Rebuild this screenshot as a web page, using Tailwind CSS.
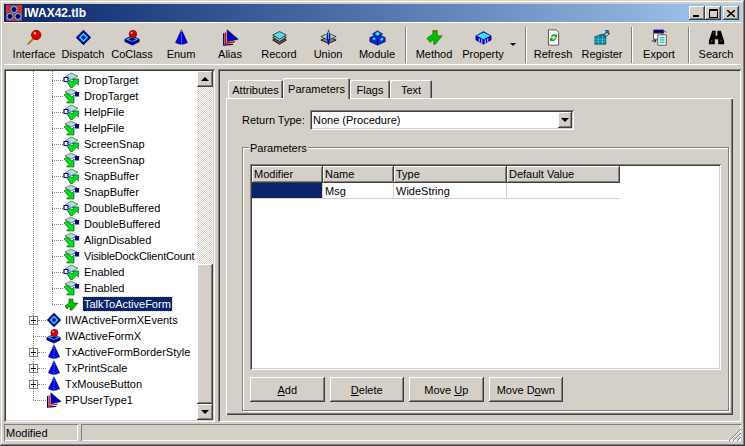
<!DOCTYPE html>
<html lang="en">
<head>
    <meta charset="UTF-8">
    <title>IWAX42.tlb</title>
    <script src="https://cdn.jsdelivr.net/npm/@tailwindcss/browser@4"></script>
</head>
<body class="bg-[#d4d0c8]">
    <!-- shared icons -->
    <svg class="hidden" xmlns="http://www.w3.org/2000/svg">
        <symbol id="i-interface" viewBox="0 0 20 20"><path d="M2 18 9 11" stroke="#b07000" stroke-width="2"/><circle cx="12" cy="7" r="5.500" fill="#e00000" stroke="#800000"/><circle cx="10.500" cy="5" r="1.500" fill="#ffb0b0"/></symbol>
        <symbol id="i-dispatch" viewBox="0 0 20 20"><path d="M10 1 19 10 10 19 1 10Z" fill="#000080"/><path d="M10 4.500 15.500 10 10 15.500 4.500 10Z" fill="#20e0f0"/><path d="M10 7 13 10 10 13 7 10Z" fill="#0000c0"/></symbol>
        <symbol id="i-coclass" viewBox="0 0 20 20"><path d="M1 12 9 8 18 12V15L10 19 1 15Z" fill="#0000a0" stroke="#000040" stroke-width=".6"/><path d="M2 12 9 9 17 12 10 15Z" fill="#20d0e0"/><path d="M5 12 10 10 14 12 10 14Z" fill="#000080"/><circle cx="10.500" cy="6" r="4.500" fill="#d80000" stroke="#600000" stroke-width=".6"/><circle cx="9" cy="4.500" r="1.200" fill="#ffb0b0"/></symbol>
        <symbol id="i-enum" viewBox="0 0 20 20"><path d="M10 1 17 16Q10 20 3 16Z" fill="#0000e0" stroke="#000060" stroke-width=".7"/><path d="M10 2 10 18" stroke="#30e0f0" stroke-width="1" stroke-dasharray="1.500 1.500"/></symbol>
        <symbol id="i-alias" viewBox="0 0 20 20"><path d="M6 1 19 12 6 15Z" fill="#0000c0" stroke="#000040" stroke-width=".7"/><path d="M4 4 4 17 15 15" fill="none" stroke="#e00000" stroke-width="1.500"/><path d="M2 5 2 19 13 18" fill="none" stroke="#000060" stroke-width="1.500"/></symbol>
        <symbol id="i-record" viewBox="0 0 20 20"><path d="M2 13 10 9 18 13 10 18Z" fill="#606060" stroke="#000"/><path d="M2 10 10 6 18 10 10 15Z" fill="#b0b0a8" stroke="#000"/><path d="M2 7 10 3 18 7 10 12Z" fill="#50e0f0" stroke="#303030"/></symbol>
        <symbol id="i-union" viewBox="0 0 20 20"><path d="M1 13 10 9 19 13 10 17Z" fill="#808080" stroke="#000"/><path d="M1 9 10 5 19 9 10 13Z" fill="#b0d8d8" stroke="#303030"/><path d="M10 1 12 9 10 19 8 9Z" fill="#0000d0" stroke="#000060" stroke-width=".5"/><path d="M10 3V12" stroke="#40e0f0"/></symbol>
        <symbol id="i-module" viewBox="0 0 20 20"><path d="M1 10 10 6 19 10V15L10 19 1 15Z" fill="#0030d0" stroke="#000060" stroke-width=".7"/><path d="M4 6 10 2 16 6 10 10Z" fill="#0030d0" stroke="#000060" stroke-width=".7"/><path d="M10 3 13 6 10 8 7 6Z M4 11 7 10 8 12 5 13Z M13 12 16 10 17 12 14 14Z" fill="#40e0f0"/><path d="M10 11V19" stroke="#000060"/></symbol>
        <symbol id="i-method" viewBox="0 0 20 20"><path d="M1 11 8 6V2L13 2 13 8 19 8 11 18 9 18 9 12 5 16Z" fill="#00c000" stroke="#005000" stroke-width=".6"/><path d="M8 2H13V8" fill="none" stroke="#806000" stroke-width="1.200"/></symbol>
        <symbol id="i-property" viewBox="0 0 20 20"><path d="M1 8 10 3 19 8 19 13 10 18 1 13Z" fill="#0000d0" stroke="#000050" stroke-width=".6"/><path d="M2 8 10 4 18 8 10 12Z" fill="#40e0f0"/><path d="M5 11V15M8 12V17M12 12V17M15 11V15" stroke="#fff"/></symbol>
        <symbol id="i-refresh" viewBox="0 0 20 20"><path d="M4 1H13L16 4V19H4Z" fill="#fff" stroke="#404040"/><path d="M7 9A4 4 0 0 1 13 7L14 5V10H10L12 8.500A2.500 2.500 0 0 0 8.500 10Z M13 11A4 4 0 0 1 7 13.500L6 15V10.500H10L8 12A2.500 2.500 0 0 0 11.500 11Z" fill="#00a000"/></symbol>
        <symbol id="i-register" viewBox="0 0 20 20"><path d="M1 9 9 6 14 8V18H1Z" fill="#108090" stroke="#003040" stroke-width=".6"/><path d="M1 12H14M1 15H14M5 7V18M10 7V18" stroke="#40e0f0" stroke-width=".7"/><path d="M10 8 17 2M17 2 13 2M17 2 17 6" stroke="#0060a0" stroke-width="1.500" fill="none"/><path d="M14 9 19 5" stroke="#404040"/></symbol>
        <symbol id="i-export" viewBox="0 0 20 20"><path d="M3 1H15V5H3Z" fill="#000080" stroke="#404040" stroke-width=".6"/><path d="M3 5H13V12H3Z" fill="#fff" stroke="#404040"/><path d="M8 7H18V19H8Z" fill="#fff" stroke="#404040"/><path d="M10 10H16M10 12H16M10 14H16M10 16H16" stroke="#00a0a0"/><path d="M1 14H6M4 12 6 14 4 16" fill="none" stroke="#000"/><path d="M16 2 18 4" stroke="#000"/></symbol>
        <symbol id="i-search" viewBox="0 0 20 20"><path d="M5 2H9V8H11V2H15L19 14V18H12V12H8V18H1V14Z" fill="#000"/><path d="M4 14H5M15 14H16" stroke="#fff"/><path d="M6 4H7" stroke="#808080"/></symbol>
        <symbol id="t-get" viewBox="0 0 16 16"><path d="M2 5 8 1 15 4 9 8Z" fill="#a4dfe4" stroke="#505050" stroke-width=".7"/><path d="M1 5.500H5V9.500H1Z" fill="#fff" stroke="#0000c0" stroke-width="1.200"/><path d="M4 10 7 8 9 10 11 8 9.500 7H15.500V13L13.500 11 9 16H8Z" fill="#00e020" stroke="#004000" stroke-width=".6"/></symbol>
        <symbol id="t-set" viewBox="0 0 16 16"><path d="M2 4 8 1 14 4 8 7Z" fill="#a4dfe4" stroke="#505050" stroke-width=".7"/><path d="M12 4H16V8.500H12Z" fill="#000080"/><path d="M1 7 4 5 9 9 11 7V15H3.500L6 12.500Z" fill="#00e020" stroke="#004000" stroke-width=".6"/></symbol>
        <symbol id="t-method" viewBox="0 0 16 16"><path d="M2 10 6 7V3H10V7H15L9 14H7V10L4 13Z" fill="#00c000" stroke="#004000" stroke-width=".6"/></symbol>
    </svg>

    <div class="w-[745px] h-[446px] overflow-hidden flex flex-col p-1 bg-[#d4d0c8] text-black text-[11px] leading-[14px] font-['Liberation_Sans',sans-serif] shadow-[inset_-1px_-1px_0_#404040,inset_1px_1px_0_#d4d0c8,inset_-2px_-2px_0_#808080,inset_2px_2px_0_#fff]">

        <!-- title bar -->
        <div class="h-[18px] shrink-0 flex items-center pl-[2px] pr-[2px] bg-gradient-to-r from-[#0a246a] to-[#a6caf0]">
            <svg class="w-4 h-4 shrink-0" viewBox="0 0 16 16"><rect width="16" height="16" fill="#d03030"/><circle cx="8" cy="4.500" r="3" fill="#000080" stroke="#40e0f0"/><circle cx="4" cy="11.500" r="3" fill="#000080" stroke="#40e0f0"/><circle cx="12" cy="11.500" r="3" fill="#000080" stroke="#40e0f0"/></svg>
            <span class="ml-[2px] font-bold text-white text-[12px]">IWAX42.tlb</span>
            <div class="ml-auto flex">
                <div class="w-4 h-[14px] flex items-end justify-start pl-1 pb-[3px] bg-[#d4d0c8] shadow-[inset_-1px_-1px_0_#404040,inset_1px_1px_0_#fff,inset_-2px_-2px_0_#808080]"><div class="w-[6px] h-[2px] bg-black"></div></div>
                <div class="w-4 h-[14px] flex items-center justify-center bg-[#d4d0c8] shadow-[inset_-1px_-1px_0_#404040,inset_1px_1px_0_#fff,inset_-2px_-2px_0_#808080]"><div class="w-[9px] h-[9px] border border-t-2 border-black"></div></div>
                <div class="w-4 h-[14px] ml-[2px] flex items-center justify-center bg-[#d4d0c8] shadow-[inset_-1px_-1px_0_#404040,inset_1px_1px_0_#fff,inset_-2px_-2px_0_#808080]"><svg class="w-2 h-[7px]" viewBox="0 0 8 7"><path d="M0 0 8 7M8 0 0 7" stroke="#000" stroke-width="1.500"/></svg></div>
            </div>
        </div>

        <!-- toolbar -->
        <div class="h-[47px] shrink-0 flex items-start pt-[5px] pl-[5.5px] shadow-[inset_0_1px_0_#fff,inset_0_-4px_0_#d4d0c8,inset_0_-5px_0_#fff]">
            <div class="w-[49px] flex flex-col items-center"><svg class="w-[17px] h-[17px] mt-[2px] mb-[1px]"><use href="#i-interface"/></svg><span>Interface</span></div>
            <div class="w-[49px] flex flex-col items-center"><svg class="w-[17px] h-[17px] mt-[2px] mb-[1px]"><use href="#i-dispatch"/></svg><span>Dispatch</span></div>
            <div class="w-[49px] flex flex-col items-center"><svg class="w-[17px] h-[17px] mt-[2px] mb-[1px]"><use href="#i-coclass"/></svg><span>CoClass</span></div>
            <div class="w-[49px] flex flex-col items-center"><svg class="w-[17px] h-[17px] mt-[2px] mb-[1px]"><use href="#i-enum"/></svg><span>Enum</span></div>
            <div class="w-[49px] flex flex-col items-center"><svg class="w-[17px] h-[17px] mt-[2px] mb-[1px]"><use href="#i-alias"/></svg><span>Alias</span></div>
            <div class="w-[49px] flex flex-col items-center"><svg class="w-[17px] h-[17px] mt-[2px] mb-[1px]"><use href="#i-record"/></svg><span>Record</span></div>
            <div class="w-[49px] flex flex-col items-center"><svg class="w-[17px] h-[17px] mt-[2px] mb-[1px]"><use href="#i-union"/></svg><span>Union</span></div>
            <div class="w-[49px] flex flex-col items-center"><svg class="w-[17px] h-[17px] mt-[2px] mb-[1px]"><use href="#i-module"/></svg><span>Module</span></div>
            <div class="w-[2px] h-9 mx-[3px] border-l border-r border-l-[#808080] border-r-white"></div>
            <div class="w-[49px] flex flex-col items-center"><svg class="w-[17px] h-[17px] mt-[2px] mb-[1px]"><use href="#i-method"/></svg><span>Method</span></div>
            <div class="w-[49px] flex flex-col items-center"><svg class="w-[17px] h-[17px] mt-[2px] mb-[1px]"><use href="#i-property"/></svg><span>Property</span></div>
            <div class="w-[11px] pt-[16px] flex justify-center"><div class="border-x-[3.500px] border-t-[3.500px] border-x-transparent border-t-black"></div></div>
            <div class="w-[2px] h-9 ml-[6px] mr-[2px] border-l border-r border-l-[#808080] border-r-white"></div>
            <div class="w-[49px] flex flex-col items-center"><svg class="w-[17px] h-[17px] mt-[2px] mb-[1px]"><use href="#i-refresh"/></svg><span>Refresh</span></div>
            <div class="w-[49px] flex flex-col items-center"><svg class="w-[17px] h-[17px] mt-[2px] mb-[1px]"><use href="#i-register"/></svg><span>Register</span></div>
            <div class="w-[2px] h-9 ml-1 mr-[2px] border-l border-r border-l-[#808080] border-r-white"></div>
            <div class="w-[49px] flex flex-col items-center"><svg class="w-[17px] h-[17px] mt-[2px] mb-[1px]"><use href="#i-export"/></svg><span>Export</span></div>
            <div class="w-[2px] h-9 ml-1 mr-[2px] border-l border-r border-l-[#808080] border-r-white"></div>
            <div class="w-[49px] flex flex-col items-center"><svg class="w-[17px] h-[17px] mt-[2px] mb-[1px]"><use href="#i-search"/></svg><span>Search</span></div>
        </div>

        <!-- main area -->
        <div class="h-[353px] shrink-0 flex gap-[3px]">

            <!-- tree + scrollbar -->
            <div class="w-[211px] shrink-0 flex p-[2px] bg-white shadow-[inset_1px_1px_0_#808080,inset_-1px_-1px_0_#fff,inset_2px_2px_0_#404040,inset_-2px_-2px_0_#d4d0c8]">
                <div class="relative w-[191px] overflow-hidden pt-[1px] whitespace-nowrap">
                    <div class="absolute left-[27px] top-0 h-[329px] border-l border-dotted border-[#808080]"></div>
                    <div class="absolute left-[46px] top-0 h-[233px] border-l border-dotted border-[#808080]"></div>

                    <div class="h-4 flex items-center pl-[46px]"><span class="w-[11px] border-t border-dotted border-[#808080]"></span><svg class="w-4 h-4"><use href="#t-get"/></svg><span class="ml-[5px]">DropTarget</span></div>
                    <div class="h-4 flex items-center pl-[46px]"><span class="w-[11px] border-t border-dotted border-[#808080]"></span><svg class="w-4 h-4"><use href="#t-set"/></svg><span class="ml-[5px]">DropTarget</span></div>
                    <div class="h-4 flex items-center pl-[46px]"><span class="w-[11px] border-t border-dotted border-[#808080]"></span><svg class="w-4 h-4"><use href="#t-get"/></svg><span class="ml-[5px]">HelpFile</span></div>
                    <div class="h-4 flex items-center pl-[46px]"><span class="w-[11px] border-t border-dotted border-[#808080]"></span><svg class="w-4 h-4"><use href="#t-set"/></svg><span class="ml-[5px]">HelpFile</span></div>
                    <div class="h-4 flex items-center pl-[46px]"><span class="w-[11px] border-t border-dotted border-[#808080]"></span><svg class="w-4 h-4"><use href="#t-get"/></svg><span class="ml-[5px]">ScreenSnap</span></div>
                    <div class="h-4 flex items-center pl-[46px]"><span class="w-[11px] border-t border-dotted border-[#808080]"></span><svg class="w-4 h-4"><use href="#t-set"/></svg><span class="ml-[5px]">ScreenSnap</span></div>
                    <div class="h-4 flex items-center pl-[46px]"><span class="w-[11px] border-t border-dotted border-[#808080]"></span><svg class="w-4 h-4"><use href="#t-get"/></svg><span class="ml-[5px]">SnapBuffer</span></div>
                    <div class="h-4 flex items-center pl-[46px]"><span class="w-[11px] border-t border-dotted border-[#808080]"></span><svg class="w-4 h-4"><use href="#t-set"/></svg><span class="ml-[5px]">SnapBuffer</span></div>
                    <div class="h-4 flex items-center pl-[46px]"><span class="w-[11px] border-t border-dotted border-[#808080]"></span><svg class="w-4 h-4"><use href="#t-get"/></svg><span class="ml-[5px]">DoubleBuffered</span></div>
                    <div class="h-4 flex items-center pl-[46px]"><span class="w-[11px] border-t border-dotted border-[#808080]"></span><svg class="w-4 h-4"><use href="#t-set"/></svg><span class="ml-[5px]">DoubleBuffered</span></div>
                    <div class="h-4 flex items-center pl-[46px]"><span class="w-[11px] border-t border-dotted border-[#808080]"></span><svg class="w-4 h-4"><use href="#t-set"/></svg><span class="ml-[5px]">AlignDisabled</span></div>
                    <div class="h-4 flex items-center pl-[46px]"><span class="w-[11px] shrink-0 border-t border-dotted border-[#808080]"></span><svg class="w-4 h-4 shrink-0"><use href="#t-set"/></svg><span class="ml-[5px] tracking-[-0.2px]">VisibleDockClientCount</span></div>
                    <div class="h-4 flex items-center pl-[46px]"><span class="w-[11px] border-t border-dotted border-[#808080]"></span><svg class="w-4 h-4"><use href="#t-get"/></svg><span class="ml-[5px]">Enabled</span></div>
                    <div class="h-4 flex items-center pl-[46px]"><span class="w-[11px] border-t border-dotted border-[#808080]"></span><svg class="w-4 h-4"><use href="#t-set"/></svg><span class="ml-[5px]">Enabled</span></div>
                    <div class="h-4 flex items-center pl-[46px]"><span class="w-[11px] border-t border-dotted border-[#808080]"></span><svg class="w-4 h-4"><use href="#t-method"/></svg><span class="ml-[4px] px-[1px] bg-[#0a246a] text-white outline-1 outline-dotted outline-[#d4d0c8]">TalkToActiveForm</span></div>

                    <div class="h-4 flex items-center pl-[23px]"><span class="w-[9px] h-[9px] flex items-center justify-center border border-[#808080] bg-white"><svg class="w-[5px] h-[5px]" viewBox="0 0 5 5"><path d="M0 2.500H5M2.500 0V5" stroke="#000"/></svg></span><span class="w-[8px] border-t border-dotted border-[#808080]"></span><svg class="w-4 h-4"><use href="#i-dispatch"/></svg><span class="ml-[3px]">IIWActiveFormXEvents</span></div>
                    <div class="h-4 flex items-center pl-[27px]"><span class="w-[13px] border-t border-dotted border-[#808080]"></span><svg class="w-4 h-4"><use href="#i-coclass"/></svg><span class="ml-[3px]">IWActiveFormX</span></div>
                    <div class="h-4 flex items-center pl-[23px]"><span class="w-[9px] h-[9px] flex items-center justify-center border border-[#808080] bg-white"><svg class="w-[5px] h-[5px]" viewBox="0 0 5 5"><path d="M0 2.500H5M2.500 0V5" stroke="#000"/></svg></span><span class="w-[8px] border-t border-dotted border-[#808080]"></span><svg class="w-4 h-4"><use href="#i-enum"/></svg><span class="ml-[3px]">TxActiveFormBorderStyle</span></div>
                    <div class="h-4 flex items-center pl-[23px]"><span class="w-[9px] h-[9px] flex items-center justify-center border border-[#808080] bg-white"><svg class="w-[5px] h-[5px]" viewBox="0 0 5 5"><path d="M0 2.500H5M2.500 0V5" stroke="#000"/></svg></span><span class="w-[8px] border-t border-dotted border-[#808080]"></span><svg class="w-4 h-4"><use href="#i-enum"/></svg><span class="ml-[3px]">TxPrintScale</span></div>
                    <div class="h-4 flex items-center pl-[23px]"><span class="w-[9px] h-[9px] flex items-center justify-center border border-[#808080] bg-white"><svg class="w-[5px] h-[5px]" viewBox="0 0 5 5"><path d="M0 2.500H5M2.500 0V5" stroke="#000"/></svg></span><span class="w-[8px] border-t border-dotted border-[#808080]"></span><svg class="w-4 h-4"><use href="#i-enum"/></svg><span class="ml-[3px]">TxMouseButton</span></div>
                    <div class="h-4 flex items-center pl-[27px]"><span class="w-[13px] border-t border-dotted border-[#808080]"></span><svg class="w-4 h-4"><use href="#i-alias"/></svg><span class="ml-[3px]">PPUserType1</span></div>
                </div>
                <div class="w-4 flex flex-col">
                    <div class="h-4 shrink-0 flex items-center justify-center bg-[#d4d0c8] shadow-[inset_-1px_-1px_0_#404040,inset_1px_1px_0_#fff,inset_-2px_-2px_0_#808080]"><div class="border-x-[4px] border-b-[4px] border-x-transparent border-b-black"></div></div>
                    <div class="h-[177px] shrink-0 bg-[conic-gradient(#d4d0c8_25%,#fff_0_50%,#d4d0c8_0_75%,#fff_0)] bg-[length:2px_2px]"></div>
                    <div class="flex-1 bg-[#d4d0c8] shadow-[inset_-1px_-1px_0_#404040,inset_1px_1px_0_#fff,inset_-2px_-2px_0_#808080]"></div>
                    <div class="h-4 shrink-0 flex items-center justify-center bg-[#d4d0c8] shadow-[inset_-1px_-1px_0_#404040,inset_1px_1px_0_#fff,inset_-2px_-2px_0_#808080]"><div class="border-x-[4px] border-t-[4px] border-x-transparent border-t-black"></div></div>
                </div>
            </div>

            <!-- right panel -->
            <div class="flex-1 flex flex-col pt-[9px] px-2 pb-[7px] shadow-[inset_1px_1px_0_#808080,inset_-1px_-1px_0_#fff,inset_2px_2px_0_#404040,inset_-2px_-2px_0_#d4d0c8]">
                <div class="flex items-end h-5 pl-[2px] shrink-0">
                    <div class="w-[55px] h-[18px] pt-[2px] flex items-center justify-center rounded-t-[2px] shadow-[inset_1px_1px_0_#fff,inset_-1px_0_0_#404040,inset_-2px_0_0_#808080]">Attributes</div>
                    <div class="relative z-10 -mb-[1px] w-[67px] h-[21px] flex items-center justify-center bg-[#d4d0c8] rounded-t-[2px] shadow-[inset_1px_1px_0_#fff,inset_-1px_0_0_#404040,inset_-2px_0_0_#808080]">Parameters</div>
                    <div class="w-[40px] h-[18px] pt-[2px] flex items-center justify-center rounded-t-[2px] shadow-[inset_1px_1px_0_#fff,inset_-1px_0_0_#404040,inset_-2px_0_0_#808080]">Flags</div>
                    <div class="w-[42px] h-[18px] pt-[2px] flex items-center justify-center rounded-t-[2px] shadow-[inset_1px_1px_0_#fff,inset_-1px_0_0_#404040,inset_-2px_0_0_#808080]">Text</div>
                </div>
                <div class="flex-1 flex flex-col pt-[12px] pl-[16px] pr-[4px] pb-[4px] shadow-[inset_1px_1px_0_#fff,inset_-1px_-1px_0_#404040,inset_-2px_-2px_0_#808080]">
                    <div class="h-5 shrink-0 flex items-center">
                        <span class="w-[68px]">Return Type:</span>
                        <div class="w-[264px] h-5 flex items-center justify-between bg-white pl-[3px] pr-[2px] shadow-[inset_1px_1px_0_#808080,inset_-1px_-1px_0_#fff,inset_2px_2px_0_#404040,inset_-2px_-2px_0_#d4d0c8]">
                            <span>None (Procedure)</span>
                            <div class="w-[14px] h-4 flex items-center justify-center bg-[#d4d0c8] shadow-[inset_-1px_-1px_0_#404040,inset_1px_1px_0_#fff,inset_-2px_-2px_0_#808080]"><div class="border-x-[4px] border-t-[4px] border-x-transparent border-t-black"></div></div>
                        </div>
                    </div>
                    <div class="relative flex-1 mt-[17px] flex flex-col pt-[16px] pl-[7px] pr-[7px] pb-[8px] border border-[#808080] shadow-[inset_1px_1px_0_#fff,1px_1px_0_#fff]">
                        <span class="absolute left-[6px] -top-[7px] px-[1px] bg-[#d4d0c8]">Parameters</span>
                        <div class="flex-1 p-[2px] bg-white shadow-[inset_1px_1px_0_#808080,inset_-1px_-1px_0_#fff,inset_2px_2px_0_#404040,inset_-2px_-2px_0_#d4d0c8]">
                            <div class="flex h-[17px]">
                                <div class="w-[71px] pl-[2px] pb-[1px] flex items-center bg-[#d4d0c8] shadow-[inset_-1px_-1px_0_#404040,inset_1px_1px_0_#fff,inset_-2px_-2px_0_#808080]">Modifier</div>
                                <div class="w-[71px] pl-[2px] pb-[1px] flex items-center bg-[#d4d0c8] shadow-[inset_-1px_-1px_0_#404040,inset_1px_1px_0_#fff,inset_-2px_-2px_0_#808080]">Name</div>
                                <div class="w-[113px] pl-[2px] pb-[1px] flex items-center bg-[#d4d0c8] shadow-[inset_-1px_-1px_0_#404040,inset_1px_1px_0_#fff,inset_-2px_-2px_0_#808080]">Type</div>
                                <div class="w-[113px] pl-[2px] pb-[1px] flex items-center bg-[#d4d0c8] shadow-[inset_-1px_-1px_0_#404040,inset_1px_1px_0_#fff,inset_-2px_-2px_0_#808080]">Default Value</div>
                            </div>
                            <div class="flex h-[16px] w-[368px] border-b border-[#d4d0c8]">
                                <div class="w-[71px] bg-[#0a246a] border-r border-[#d4d0c8]"></div>
                                <div class="w-[71px] pl-[2px] flex items-center border-r border-[#d4d0c8]">Msg</div>
                                <div class="w-[113px] pl-[2px] flex items-center border-r border-[#d4d0c8]">WideString</div>
                                <div class="w-[113px]"></div>
                            </div>
                        </div>
                        <div class="h-[25px] mt-[7px] shrink-0 flex gap-[5px]">
                            <div class="w-[74.500px] flex items-center justify-center bg-[#d4d0c8] shadow-[inset_-1px_-1px_0_#404040,inset_1px_1px_0_#fff,inset_-2px_-2px_0_#808080]"><span><u>A</u>dd</span></div>
                            <div class="w-[74.500px] flex items-center justify-center bg-[#d4d0c8] shadow-[inset_-1px_-1px_0_#404040,inset_1px_1px_0_#fff,inset_-2px_-2px_0_#808080]"><span><u>D</u>elete</span></div>
                            <div class="w-[74.500px] flex items-center justify-center bg-[#d4d0c8] shadow-[inset_-1px_-1px_0_#404040,inset_1px_1px_0_#fff,inset_-2px_-2px_0_#808080]"><span>Move <u>U</u>p</span></div>
                            <div class="w-[74.500px] flex items-center justify-center bg-[#d4d0c8] shadow-[inset_-1px_-1px_0_#404040,inset_1px_1px_0_#fff,inset_-2px_-2px_0_#808080]"><span>Move D<u>o</u>wn</span></div>
                        </div>
                    </div>
                </div>
            </div>
        </div>

        <!-- status bar -->
        <div class="mt-[2px] h-[17px] shrink-0 flex gap-[3px]">
            <div class="w-[74px] pl-[2px] flex items-center shadow-[inset_1px_1px_0_#808080,inset_-1px_-1px_0_#fff]">Modified</div>
            <div class="flex-1 flex items-end justify-end shadow-[inset_1px_1px_0_#808080,inset_-1px_-1px_0_#fff]">
                <svg class="w-[13px] h-[13px]" viewBox="0 0 13 13"><path d="M1 13 13 1M5 13 13 5M9 13 13 9" stroke="#808080"/><path d="M2 13 13 2M6 13 13 6M10 13 13 10" stroke="#fff"/></svg>
            </div>
        </div>
    </div>
</body>
</html>
